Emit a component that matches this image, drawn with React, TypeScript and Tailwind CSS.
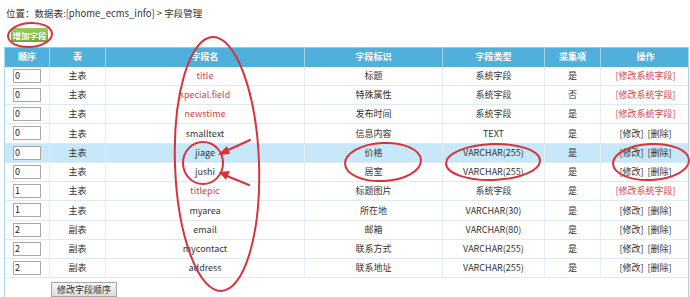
import React from "react";

type Row = {
  order: string;
  table: string;
  name: string;
  sys: boolean;
  label: string;
  type: string;
  collect: string;
  hl?: boolean;
};

const ROWS: Row[] = [
  { order: "0", table: "主表", name: "title", sys: true, label: "标题", type: "系统字段", collect: "是" },
  { order: "0", table: "主表", name: "special.field", sys: true, label: "特殊属性", type: "系统字段", collect: "否" },
  { order: "0", table: "主表", name: "newstime", sys: true, label: "发布时间", type: "系统字段", collect: "是" },
  { order: "0", table: "主表", name: "smalltext", sys: false, label: "信息内容", type: "TEXT", collect: "是" },
  { order: "0", table: "主表", name: "jiage", sys: false, label: "价格", type: "VARCHAR(255)", collect: "是", hl: true },
  { order: "0", table: "主表", name: "jushi", sys: false, label: "居室", type: "VARCHAR(255)", collect: "是" },
  { order: "1", table: "主表", name: "titlepic", sys: true, label: "标题图片", type: "系统字段", collect: "是" },
  { order: "1", table: "主表", name: "myarea", sys: false, label: "所在地", type: "VARCHAR(30)", collect: "是" },
  { order: "2", table: "副表", name: "email", sys: false, label: "邮箱", type: "VARCHAR(80)", collect: "是" },
  { order: "2", table: "副表", name: "mycontact", sys: false, label: "联系方式", type: "VARCHAR(255)", collect: "是" },
  { order: "2", table: "副表", name: "address", sys: false, label: "联系地址", type: "VARCHAR(255)", collect: "是" },
];

const COLS = "grid grid-cols-[44px_56px_199px_138px_102px_56px_90px]";
const HEADS = ["顺序", "表", "字段名", "字段标识", "字段类型", "采集项", "操作"];

// red pen marks drawn over the screenshot
function Marks() {
  const red = "#d8323c";
  return (
    <svg className="pointer-events-none absolute left-0 top-0" width="690" height="297" viewBox="0 0 690 297">
      <g fill="none" stroke={red} strokeWidth="2" strokeLinecap="round">
        <ellipse cx="30" cy="35" rx="22" ry="12" transform="rotate(-4 30 35)" />
        <ellipse cx="217" cy="164" rx="42" ry="127" transform="rotate(-2 217 164)" />
        <ellipse cx="203" cy="163" rx="20" ry="21" />
        <ellipse cx="383" cy="162" rx="38" ry="19" transform="rotate(-3 383 162)" />
        <ellipse cx="493" cy="162" rx="47" ry="18" transform="rotate(-2 493 162)" />
        <ellipse cx="651" cy="162" rx="38" ry="18" transform="rotate(-3 651 162)" />
        <path d="M250 140 L226 151" />
        <path d="M249 185 L227 176" />
      </g>
      <g fill={red}>
        <path d="M218 155 L227 146 L230 154 Z" />
        <path d="M219 172 L230 171 L226 180 Z" />
      </g>
    </svg>
  );
}

export default function App() {
  return (
    <div
      className="relative w-[690px] h-[297px] overflow-hidden bg-white text-[9px] text-[#333]"
      style={{ fontFamily: '"Noto Sans CJK SC", "Liberation Sans", sans-serif' }}
    >
      <div className="pl-[6px] pt-[5px] leading-[16px] text-[9.5px] text-[#333]">
        位置：数据表:[phome_ecms_info] &gt; 字段管理
      </div>
      <div className="pl-[11px] pt-[7px]">
        <button className="h-[14px] w-[37px] rounded-[1px] bg-gradient-to-b from-[#9ccc5a] to-[#6ea632] text-[8.5px] font-bold leading-[14px] text-white">
          增加字段
        </button>
      </div>

      <div className="ml-[4px] mt-[4px] w-[685px] border-l border-r border-[#a9d6ec]">
        <div className={`${COLS} h-[20px] border-t border-[#8ccbe9] bg-[#4fb0dc] font-bold text-white`}>
          {HEADS.map((h, i) => (
            <div key={h} className={`flex items-center justify-center ${i > 0 ? "border-l border-[#9fd3ed]" : ""}`}>
              {h}
            </div>
          ))}
        </div>

        {ROWS.map((r) => (
          <div
            key={r.name}
            className={`${COLS} h-[19.25px] border-b border-[#dfeaf0] ${r.hl ? "bg-[#c7e8f8]" : "bg-white"}`}
          >
            <div className="flex items-center pl-[8px]">
              <div className="h-[14px] w-[28px] border border-[#a8a8a8] bg-white pl-[1px] leading-[12px] text-[9px] text-[#222]">
                {r.order}
              </div>
            </div>
            <div className="flex items-center justify-center border-l border-[#e4eef3]">{r.table}</div>
            <div
              className={`flex items-center justify-center border-l border-[#e4eef3] ${r.sys ? "text-[#cf4048]" : ""}`}
            >
              {r.name}
            </div>
            <div className="flex items-center justify-center border-l border-[#e4eef3]">{r.label}</div>
            <div className="flex items-center justify-center border-l border-[#e4eef3]">{r.type}</div>
            <div className="flex items-center justify-center border-l border-[#e4eef3]">{r.collect}</div>
            <div className="flex items-center justify-center border-l border-[#e4eef3]">
              {r.sys ? (
                <span className="text-[#d5454c]">[修改系统字段]</span>
              ) : (
                <span className="space-x-[4px]">
                  <span>[修改]</span>
                  <span>[删除]</span>
                </span>
              )}
            </div>
          </div>
        ))}

        <div className="h-[30px] pl-[46px] pt-[4px]">
          <button className="h-[15px] border border-[#a6a6a6] bg-gradient-to-b from-[#f7f7f7] to-[#dcdcdc] px-[5px] text-[9px] leading-[13px] text-[#333]">
            修改字段顺序
          </button>
        </div>
      </div>

      <Marks />
    </div>
  );
}
